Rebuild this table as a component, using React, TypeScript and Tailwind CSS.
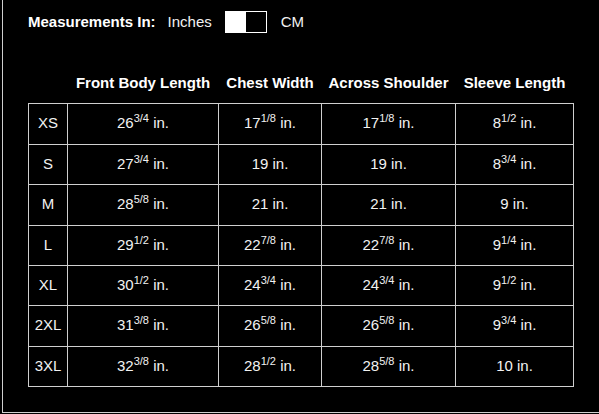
import React from 'react';

type Frac = { whole: string; frac?: string };

const sizes = ['XS', 'S', 'M', 'L', 'XL', '2XL', '3XL'];

// [front body, chest, across shoulder, sleeve]
const rows: Frac[][] = [
  [{ whole: '26', frac: '3/4' }, { whole: '17', frac: '1/8' }, { whole: '17', frac: '1/8' }, { whole: '8', frac: '1/2' }],
  [{ whole: '27', frac: '3/4' }, { whole: '19' }, { whole: '19' }, { whole: '8', frac: '3/4' }],
  [{ whole: '28', frac: '5/8' }, { whole: '21' }, { whole: '21' }, { whole: '9' }],
  [{ whole: '29', frac: '1/2' }, { whole: '22', frac: '7/8' }, { whole: '22', frac: '7/8' }, { whole: '9', frac: '1/4' }],
  [{ whole: '30', frac: '1/2' }, { whole: '24', frac: '3/4' }, { whole: '24', frac: '3/4' }, { whole: '9', frac: '1/2' }],
  [{ whole: '31', frac: '3/8' }, { whole: '26', frac: '5/8' }, { whole: '26', frac: '5/8' }, { whole: '9', frac: '3/4' }],
  [{ whole: '32', frac: '3/8' }, { whole: '28', frac: '1/2' }, { whole: '28', frac: '5/8' }, { whole: '10' }],
];

const rowHeights = ['h-[41px]', 'h-[40px]', 'h-[41px]', 'h-[40px]', 'h-[40px]', 'h-[41px]', 'h-[40px]'];

const Measure: React.FC<{ v: Frac }> = ({ v }) => (
  <span>
    {v.whole}
    {v.frac && <sup className="text-[11px] -top-[0.55em]">{v.frac}</sup>} in.
  </span>
);

const App: React.FC = () => {
  return (
    <div className="w-[599px] h-[414px] bg-black overflow-hidden">
      <div
        className="ml-[2px] h-[413px] border-l border-b border-[#cfcfcf] text-[#f2f2f2]"
        style={{ fontFamily: '"Liberation Sans", Arial, sans-serif' }}
      >
        {/* unit switch */}
        <div className="flex items-center pl-[25px] pt-[11px] h-[33px]">
          <span className="text-[15px] font-bold text-white">Measurements In:</span>
          <span className="ml-[12px] text-[15px]">Inches</span>
          <button className="ml-[13px] flex w-[42px] h-[22px] border border-white">
            <span className="w-[20px] h-full bg-white" />
          </button>
          <span className="ml-[14px] text-[15px]">CM</span>
        </div>

        <table className="ml-[25px] mt-[35px] border-collapse table-fixed text-[15px]">
          <colgroup>
            <col className="w-[39px]" />
            <col className="w-[151px]" />
            <col className="w-[103px]" />
            <col className="w-[134px]" />
            <col className="w-[118px]" />
          </colgroup>
          <thead>
            <tr className="h-[35px]">
              <th />
              <th className="font-bold text-white align-middle pb-[5px] whitespace-nowrap">Front Body Length</th>
              <th className="font-bold text-white align-middle pb-[5px] whitespace-nowrap">Chest Width</th>
              <th className="font-bold text-white align-middle pb-[5px] whitespace-nowrap">Across Shoulder</th>
              <th className="font-bold text-white align-middle pb-[5px] whitespace-nowrap">Sleeve Length</th>
            </tr>
          </thead>
          <tbody>
            {rows.map((r, i) => (
              <tr key={sizes[i]} className={rowHeights[i]}>
                <td className="border border-[#cfcfcf] text-center align-middle">{sizes[i]}</td>
                {r.map((v, j) => (
                  <td key={j} className="border border-[#cfcfcf] text-center align-middle">
                    <Measure v={v} />
                  </td>
                ))}
              </tr>
            ))}
          </tbody>
        </table>
      </div>
    </div>
  );
};

export default App;
